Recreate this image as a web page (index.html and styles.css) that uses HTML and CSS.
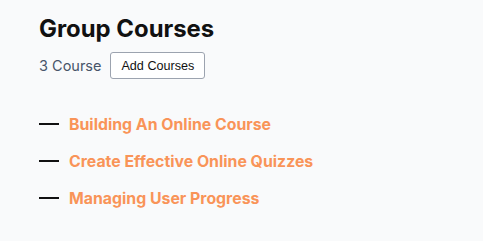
FILE: index.html
```html
<!DOCTYPE html>
<html>
<head>
<meta charset="utf-8">
<link rel="stylesheet" href="styles.css">
</head>
<body>
<div class="group">
  <h1 class="title">Group Courses</h1>
  <div class="meta">
    <span class="count">3 Course</span>
    <button class="add-btn">Add Courses</button>
  </div>
  <ul class="courses">
    <li class="course"><span class="dash"></span><a class="course-link">Building An Online Course</a></li>
    <li class="course"><span class="dash"></span><a class="course-link">Create Effective Online Quizzes</a></li>
    <li class="course"><span class="dash"></span><a class="course-link">Managing User Progress</a></li>
  </ul>
</div>
</body>
</html>
```
FILE: styles.css
```css
html, body {
  margin: 0;
  padding: 0;
  background: #f9fafb;
}
body {
  font-family: Inter, "Noto Sans", sans-serif;
}
.group {
  padding: 14px 39px;
}
.title {
  margin: 0;
  font-size: 23.9px;
  line-height: 30px;
  font-weight: 700;
  color: #111111;
}
.meta {
  display: flex;
  align-items: center;
  gap: 9px;
  margin-top: 8px;
}
.count {
  font-size: 14.5px;
  color: #475569;
}
.add-btn {
  font-family: "Liberation Sans", Arial, sans-serif;
  font-size: 12.6px;
  color: #111;
  background: #ffffff;
  border: 1px solid #9ca3af;
  border-radius: 3px;
  height: 27px;
  padding: 0 10px;
}
.courses {
  list-style: none;
  margin: 35px 0 0;
  padding: 0;
  display: flex;
  flex-direction: column;
  gap: 17px;
}
.course {
  display: flex;
  align-items: center;
  gap: 10px;
  height: 20px;
}
.dash {
  width: 20px;
  height: 2px;
  background: #111;
}
.course-link {
  font-size: 15.85px;
  font-weight: 700;
  color: #f99458;
}
```
